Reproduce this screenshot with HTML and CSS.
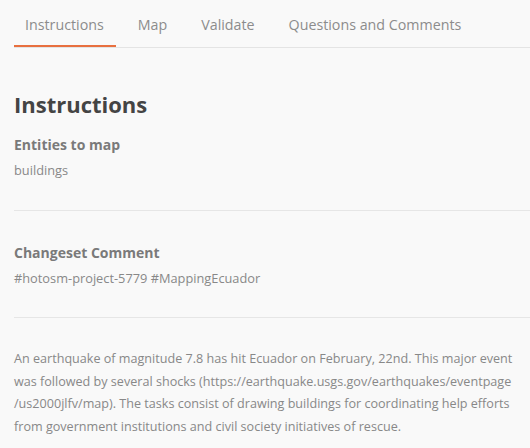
FILE: index.html
```html
<!DOCTYPE html>
<html>
<head>
<meta charset="utf-8">
<link rel="stylesheet" href="styles.css">
</head>
<body>
<div class="page">
  <nav class="tabs">
    <span class="tab active">Instructions</span>
    <span class="tab">Map</span>
    <span class="tab">Validate</span>
    <span class="tab">Questions and Comments</span>
  </nav>
  <h1 class="title">Instructions</h1>
  <section class="field">
    <h2 class="label">Entities to map</h2>
    <p class="value">buildings</p>
  </section>
  <section class="field">
    <h2 class="label">Changeset Comment</h2>
    <p class="value">#hotosm-project-5779 #MappingEcuador</p>
  </section>
  <p class="desc">An earthquake of magnitude 7.8 has hit Ecuador on February, 22nd. This major event was followed by several shocks (https://earthquake.usgs.gov/earthquakes/eventpage /us2000jlfv/map). The tasks consist of drawing buildings for coordinating help efforts from government institutions and civil society initiatives of rescue.</p>
</div>
</body>
</html>
```
FILE: styles.css
```css
html, body {
  margin: 0;
  padding: 0;
  background: #f9f9f9;
}
body {
  font-family: "Open Sans", sans-serif;
  color: #8a8a8a;
}
.page {
  padding: 0 0 0 14px;
}
.tabs {
  display: flex;
  gap: 11px;
  border-bottom: 1px solid #e4e4e4;
  padding-top: 13px;
}
.tab {
  font-size: 14.25px;
  line-height: 20px;
  padding: 2px 12px 10px 11px;
  border-bottom: 2px solid transparent;
  color: #8c8c8c;
}
.tab.active {
  border-bottom-color: #e8703f;
}
.title {
  margin: 42px 0 0;
  font-size: 22px;
  line-height: 28px;
  font-weight: 700;
  color: #444;
}
.field {
  border-bottom: 1px solid #e6e6e6;
  padding: 17px 0 30px;
}
.field + .field {
  padding: 32px 0 29px;
}
.label {
  margin: 0;
  font-size: 14px;
  line-height: 20px;
  font-weight: 700;
  color: #7a7a7a;
}
.value {
  margin: 5px 0 0;
  font-size: 12.8px;
  line-height: 20px;
  color: #888;
}
.desc {
  margin: 30px 0 0;
  font-size: 12.6px;
  line-height: 22.7px;
  color: #888;
}
```
